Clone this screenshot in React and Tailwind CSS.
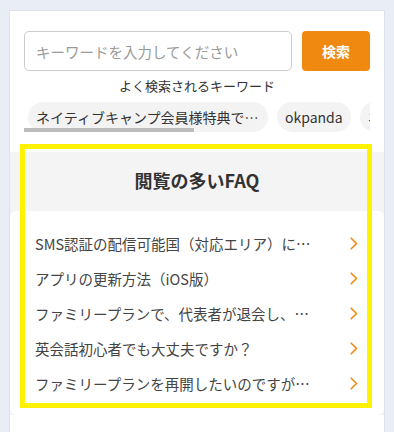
import React from 'react';

const keywords = ['ネイティブキャンプ会員様特典でもらえる', 'okpanda', 'ネイティブキャンプ'];

const faqs = [
  'SMS認証の配信可能国（対応エリア）について教えてください',
  'アプリの更新方法（iOS版）',
  'ファミリープランで、代表者が退会し、家族会員のみ継続できますか？',
  '英会話初心者でも大丈夫ですか？',
  'ファミリープランを再開したいのですがどうすればいいですか？',
];

const Chevron = () => (
  <svg width="8" height="13" viewBox="0 0 8 13" fill="none" className="shrink-0">
    <path d="M1.2 1.2L6.5 6.5L1.2 11.8" stroke="#f0890f" strokeWidth="1.6" strokeLinecap="round" strokeLinejoin="round" />
  </svg>
);

const App = () => {
  return (
    <div
      className="relative h-[432px] w-[394px] overflow-hidden bg-[#e9edf5] pl-[9px] pr-[9px] pt-[10px]"
      style={{ fontFamily: '"Noto Sans CJK JP", "Noto Sans", sans-serif' }}
    >
      <div className="h-[440px] border border-[#dde2ea] bg-white">
        <div className="px-[14px] pt-[20px] pb-[20px]">
          <div className="flex gap-[10px]">
            <input
              className="h-[40px] min-w-0 flex-1 rounded-[5px] border border-[#cccccc] bg-white px-[11px] text-[14.5px] text-[#333] outline-none placeholder:text-[#9a9a9a]"
              placeholder="キーワードを入力してください"
            />
            <button className="h-[40px] w-[68px] rounded-[4px] bg-[#f0890f] text-[14px] font-bold text-white">
              検索
            </button>
          </div>
          <div className="mt-[6px] text-center text-[13px] leading-[18px] text-[#333]">
            よく検索されるキーワード
          </div>
          <div className="relative mt-[7px] h-[30px] overflow-hidden">
            <div className="flex gap-[9px] pl-[4px]">
              {keywords.map((k, i) => (
                <div
                  key={i}
                  className={`h-[30px] shrink-0 truncate rounded-full bg-[#f3f3f3] px-[8px] text-[14px] leading-[30px] text-[#333] ${i === 0 ? 'max-w-[240px]' : ''}`}
                >
                  {k}
                </div>
              ))}
            </div>
            <div className="absolute left-0 top-[26px] h-[4px] w-[170px] bg-[#bdbdbd]" />
          </div>
        </div>

        <div className="bg-[#f4f4f4] pt-[16px]">
          <h2 className="mb-[19px] text-center text-[18px] font-bold leading-[24px] text-[#333]">
            閲覧の多いFAQ
          </h2>
          <div className="rounded-[6px] bg-white pb-[14px] pl-[25px] pr-[26px] pt-[15px]">
            {faqs.map((q, i) => (
              <div key={i} className="flex h-[35px] items-center justify-between">
                <div className="max-w-[282px] truncate text-[14.5px] text-[#444]">{q}</div>
                <Chevron />
              </div>
            ))}
          </div>
        </div>
      </div>

      <div className="pointer-events-none absolute left-[20px] top-[144px] h-[264px] w-[352px] border-[5px] border-[#fff200]" />
    </div>
  );
};

export default App;
